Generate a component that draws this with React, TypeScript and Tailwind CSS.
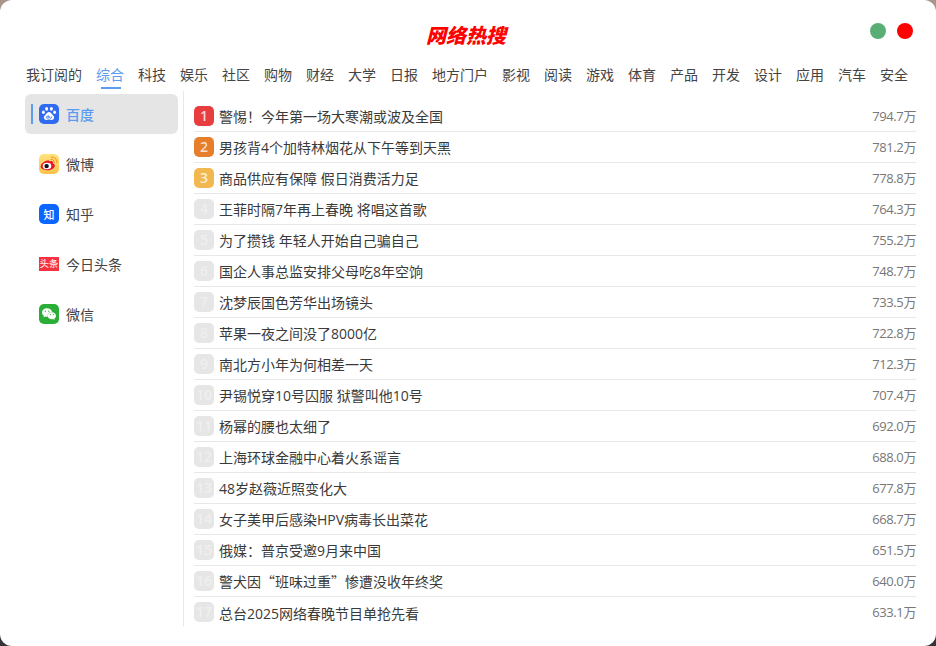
import { SiWechat } from 'react-icons/si'

const tabs = ['我订阅的', '综合', '科技', '娱乐', '社区', '购物', '财经', '大学', '日报', '地方门户', '影视', '阅读', '游戏', '体育', '产品', '开发', '设计', '应用', '汽车', '安全']

const hotList = [
  { title: '警惕！今年第一场大寒潮或波及全国', heat: '794.7万' },
  { title: '男孩背4个加特林烟花从下午等到天黑', heat: '781.2万' },
  { title: '商品供应有保障 假日消费活力足', heat: '778.8万' },
  { title: '王菲时隔7年再上春晚 将唱这首歌', heat: '764.3万' },
  { title: '为了攒钱 年轻人开始自己骗自己', heat: '755.2万' },
  { title: '国企人事总监安排父母吃8年空饷', heat: '748.7万' },
  { title: '沈梦辰国色芳华出场镜头', heat: '733.5万' },
  { title: '苹果一夜之间没了8000亿', heat: '722.8万' },
  { title: '南北方小年为何相差一天', heat: '712.3万' },
  { title: '尹锡悦穿10号囚服 狱警叫他10号', heat: '707.4万' },
  { title: '杨幂的腰也太细了', heat: '692.0万' },
  { title: '上海环球金融中心着火系谣言', heat: '688.0万' },
  { title: '48岁赵薇近照变化大', heat: '677.8万' },
  { title: '女子美甲后感染HPV病毒长出菜花', heat: '668.7万' },
  { title: '俄媒：普京受邀9月来中国', heat: '651.5万' },
  {
    title: (
      <>
        警犬因<span className="font-['Noto_Sans_CJK_SC']">“</span>班味过重<span className="font-['Noto_Sans_CJK_SC']">”</span>惨遭没收年终奖
      </>
    ),
    heat: '640.0万',
  },
  { title: '总台2025网络春晚节目单抢先看', heat: '633.1万' },
]

function BaiduIcon() {
  return (
    <div className="w-5 h-5 rounded-[5px] bg-[#2f6bf0] flex items-center justify-center">
      <svg width="16" height="16" viewBox="0 0 16 16" fill="#fff">
        <ellipse cx="5.6" cy="2.8" rx="1.5" ry="1.9" />
        <ellipse cx="10.4" cy="2.8" rx="1.5" ry="1.9" />
        <ellipse cx="2.4" cy="6.2" rx="1.4" ry="1.8" />
        <ellipse cx="13.6" cy="6.2" rx="1.4" ry="1.8" />
        <path d="M8 6c-1.700 0-2.400 1.500-3.500 2.700-1 1-1.900 1.900-1.600 3.300.3 1.500 1.600 2.100 3 1.900.8-.1 1.400-.3 2.100-.3s1.300.2 2.100.3c1.400.2 2.700-.4 3-1.900.3-1.400-.6-2.300-1.600-3.300C10.400 7.500 9.700 6 8 6z" />
        <path d="M7.300 9.300v3H6.200c-.6 0-1-.4-1-1s.4-1 1-1h1.100M8.700 10.300v1.300c0 .5.3.8.8.8s.9-.3.9-.8v-1.300" fill="none" stroke="#2f6bf0" strokeWidth="0.8" />
      </svg>
    </div>
  )
}

function WeiboIcon() {
  return (
    <div className="w-5 h-5 rounded-[5px] bg-gradient-to-b from-[#ffe27a] to-[#fcc24a] flex items-center justify-center">
      <svg width="20" height="20" viewBox="0 0 20 20">
        <path d="M8.500 6.600c-3.200.6-6.800 3.400-6.800 6 0 2 2.600 3.700 6.300 3.700 4.200 0 7.800-2.200 7.800-4.600 0-1.400-1.200-1.900-2-2.100.5-1.200.2-2.500-1.500-2.600-.8 0-1.500.3-2 .5.300-1-.5-1.200-1.800-.9z" fill="#e6162d" />
        <ellipse cx="8" cy="12" rx="4.300" ry="3.200" fill="#fff" />
        <circle cx="7.600" cy="12.100" r="2.200" fill="#111" />
        <path d="M12 5.500c2-.3 3.500 1 3.300 3M12.300 3c3.500-.3 5.800 2.200 5.400 5.500" fill="none" stroke="#f08a1d" strokeWidth="1" strokeLinecap="round" />
      </svg>
    </div>
  )
}

function ZhihuIcon() {
  return (
    <div className="w-5 h-5 rounded-[5px] bg-[#0a66ff] flex items-center justify-center text-white text-[11px] leading-none font-medium">
      知
    </div>
  )
}

function ToutiaoIcon() {
  return (
    <div className="w-5 h-5 flex items-center justify-center">
      <div className="w-5 h-[14px] bg-[#f5323f] flex items-center justify-center text-[#ffe3e5] text-[9.500px] leading-none font-medium">
        头条
      </div>
    </div>
  )
}

function WechatIcon() {
  return (
    <div className="w-5 h-5 rounded-[5px] bg-[#2aae35] flex items-center justify-center">
      <SiWechat size={14} color="#fff" />
    </div>
  )
}

const platforms = [
  { name: '百度', icon: <BaiduIcon /> },
  { name: '微博', icon: <WeiboIcon /> },
  { name: '知乎', icon: <ZhihuIcon /> },
  { name: '今日头条', icon: <ToutiaoIcon /> },
  { name: '微信', icon: <WechatIcon /> },
]

const rankColor = (rank: number) => {
  if (rank === 1) return 'bg-[#e83d3f] text-[#f6d5d5]'
  if (rank === 2) return 'bg-[#e67e2b] text-[#f8dfc8]'
  if (rank === 3) return 'bg-[#f2b84f] text-[#fbeccf]'
  return 'bg-[#e6e6e6] text-[#efefef]'
}

export default function App() {
  return (
    <div className="w-[936px] h-[646px] bg-gradient-to-b from-[#a8968a] to-[#33343a] font-['Open_Sans','Noto_Sans_CJK_SC',sans-serif]">
      <div className="h-full bg-white rounded-[12px] overflow-hidden flex flex-col text-[#333]">
        {/* Title bar */}
        <div className="relative h-[66px] shrink-0 flex items-center justify-center pt-[5px] pr-[4px]">
          <h1 className="text-[#ff0000] text-[20px] leading-none font-black italic">网络热搜</h1>
          <div className="absolute right-[23px] top-[23px] flex gap-[11px]">
            <span className="w-4 h-4 rounded-full bg-[#58ae75]" />
            <span className="w-4 h-4 rounded-full bg-[#ff0000]" />
          </div>
        </div>

        {/* Category tabs */}
        <div className="h-[25px] shrink-0 flex gap-[14px] pl-[26px] text-[14px]">
          {tabs.map(tab => (
            <div key={tab} className={`relative h-[18px] leading-[18px] whitespace-nowrap ${tab === '综合' ? 'text-[#5b9cf0]' : 'text-[#444]'}`}>
              {tab}
              {tab === '综合' && <span className="absolute left-[5px] right-[3px] top-[21px] h-[2px] bg-[#5b9cf0]" />}
            </div>
          ))}
        </div>

        <div className="flex pl-[25px] pr-5 h-[535px] overflow-hidden">
          {/* Platform sidebar */}
          <div className="w-[159px] shrink-0 border-r border-[#e8e8e8] pr-[5px] pt-[3px] flex flex-col gap-[10px]">
            {platforms.map((p, idx) => (
              <div key={p.name} className={`relative h-10 rounded-[6px] flex items-center pl-[14px] gap-2 text-[14px] ${idx === 0 ? 'bg-[#e5e5e5] text-[#5b9cf0] font-medium' : 'text-[#444]'}`}>
                {idx === 0 && <span className="absolute left-[6px] top-[10px] w-[2px] h-5 bg-[#5b9cf0]" />}
                {p.icon}
                <span className="-ml-px">{p.name}</span>
              </div>
            ))}
          </div>

          {/* Hot search list */}
          <div className="flex-1 pl-[10px] pt-[10px]">
            {hotList.map((item, idx) => (
              <div key={item.heat} className="h-[31px] flex items-center border-b border-[#e8e8e8] last:border-b-0 pb-[1px] box-border">
                <div className={`w-5 h-5 rounded-[5px] flex items-center justify-center text-[14px] leading-none font-semibold shrink-0 ${rankColor(idx + 1)}`}>
                  {idx + 1}
                </div>
                <span className="ml-[5px] flex-1 pt-[2px] text-[14px] text-[#3a3a3a] whitespace-nowrap">{item.title}</span>
                <span className="pt-[2px] text-[13px] text-[#777] tracking-[-0.4px]">{item.heat}</span>
              </div>
            ))}
          </div>
        </div>
      </div>
    </div>
  )
}
